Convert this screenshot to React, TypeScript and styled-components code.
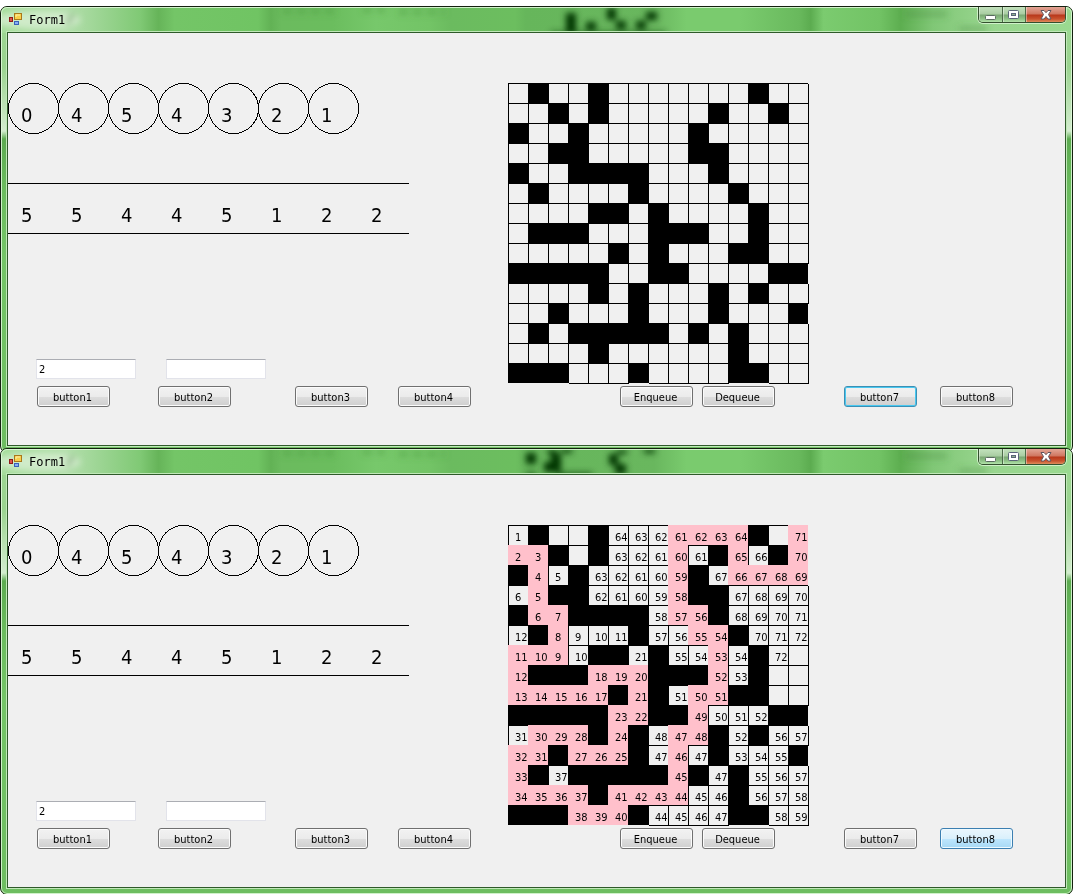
import React, { useId } from "react";
import styled, { createGlobalStyle, css } from "styled-components";

const GlobalStyle = createGlobalStyle`
  * { box-sizing: border-box; }
  body {
    margin: 0;
    background: #fff;
    color: #000;
    font: 11px/14px "DejaVu Sans Condensed", "DejaVu Sans", sans-serif;
  }
`;

const Desktop = styled.main`
  height: 100vh;
  padding-top: 6px;
  overflow: hidden;
`;

const Frame = styled.section`
  position: relative;
  margin-bottom: -5px;
  padding: 0 6px 6px;
  border: 1px solid #14200f;
  border-radius: 7px;
  overflow: hidden;
  background: linear-gradient(
    #9fd894 0,
    #9ad38f 60px,
    #d3ecce 124px,
    #5cab50 132px,
    #6abb5d 180px,
    #74c567 250px,
    #6dbd60 100%
  );

  &::after {
    content: "";
    position: absolute;
    inset: 0;
    border: 1px solid rgba(225, 250, 220, 0.85);
    border-radius: 6px;
    pointer-events: none;
  }
`;

const Backdrop = styled.svg`
  position: absolute;
  top: 0;
  left: 0;
  width: 100%;
  height: 26px;
`;

const TitleBar = styled.header`
  position: relative;
  z-index: 1;
  display: flex;
  height: 25px;
  padding-left: 2px;
  gap: 7px;
`;

const AppIcon = styled.svg`
  width: 13px;
  height: 13px;
  margin-top: 6px;
`;

const Title = styled.h1`
  margin: 5px auto 0 0;
  font: 12px/16px "DejaVu Sans Mono", monospace;
`;

const Controls = styled.div`
  display: flex;
  height: 16px;
  border: 1px solid #34502f;
  border-top: 0;
  border-radius: 0 0 5px 5px;
  overflow: hidden;
  box-shadow: 0 0 0 1px rgba(225, 250, 220, 0.75);
`;

const Control = styled.button<{ $close?: boolean }>`
  display: grid;
  place-items: center;
  width: ${(p) => (p.$close ? "40px" : "23px")};
  padding: 1px 0 0;
  border: 0;
  border-left: 1px solid #4c6c47;
  background: ${(p) =>
    p.$close
      ? "linear-gradient(#e3a596 0, #cf7660 7px, #b8371b 8px, #c9532f 12px, #de8c5c)"
      : "linear-gradient(#c3e2bd 0, #a9cda2 7px, #7ba874 8px, #8fc387 12px, #b3e4ab)"};
  box-shadow: inset 1px 0 0 rgba(255, 255, 255, 0.4);

  &:first-child {
    border-left: 0;
  }
`;

const Client = styled.div`
  position: relative;
  z-index: 1;
  height: 414px;
  border: 1px solid #2f5a2a;
  box-shadow: 0 0 0 1px #c0e8b8;
  background: #f0f0f0;
`;

const Upper = styled.div`
  display: flex;
  padding-top: 50px;
`;

const Structures = styled.div`
  flex: 0 0 500px;
`;

const digits = css`
  display: flex;
  margin: 0;
  padding: 0;
  list-style: none;
  font-size: 20px;
  line-height: 24px;
`;

const Stack = styled.ol`
  ${digits}
`;

const Ball = styled.li`
  position: relative;
  width: 50px;
  height: 51px;
  padding: 20px 0 0 13px;
`;

const Ring = styled.svg`
  position: absolute;
  top: 0;
  left: 0;
  width: 51px;
  height: 51px;
`;

const Queue = styled.ol`
  ${digits}
  width: 401px;
  height: 51px;
  margin-top: 49px;
  border: solid #000;
  border-width: 1px 0;
`;

const QueueItem = styled.li`
  width: 50px;
  padding: 19px 0 0 13px;
`;

const Fields = styled.div`
  display: flex;
  gap: 30px;
  margin: 125px 0 0 28px;
`;

const Field = styled.input`
  width: 100px;
  height: 20px;
  padding: 0 2px;
  border: 1px solid #e2e3ea;
  border-top-color: #abadb3;
  background: #fff;
  color: #000;
  font: inherit;
  outline: 0;
`;

const Maze = styled.table`
  height: 300px;
  border-spacing: 0;
`;

type Kind = "wall" | "path" | "open";

const Cell = styled.td<{ $kind: Kind }>`
  width: 20px;
  min-width: 20px;
  height: 20px;
  padding: 5px 0 0 7px;
  line-height: 15px;
  vertical-align: top;
  ${(p) => p.$kind === "wall" && "background: #000;"}
  ${(p) => p.$kind === "path" && "background: #ffc0cb;"}
  ${(p) =>
    p.$kind === "open" &&
    "background: #f0f0f0; box-shadow: inset 1px 1px 0 #000, 1px 1px 0 #000;"}
`;

const Actions = styled.div`
  display: flex;
  margin-top: 3px;
`;

type Look = "normal" | "focused" | "hot";

const looks: Record<Look, string> = {
  normal: `
    border-color: #707070;
    background: linear-gradient(#f2f2f2, #ebebeb 10px, #dddddd 10px, #cfcfcf);
    box-shadow: inset 0 0 0 1px #fbfbfb;`,
  focused: `
    border-color: #3c8fb4;
    background: linear-gradient(#f2f2f2, #ebebeb 10px, #dddddd 10px, #cfcfcf);
    box-shadow: inset 0 0 0 1px #48c8f0;`,
  hot: `
    border-color: #3c7fb1;
    background: linear-gradient(#eaf6fd, #d9f0fc 10px, #bee6fd 10px, #a7d9f5);
    box-shadow: inset 0 0 0 1px #eefaff;`,
};

const Button = styled.button<{ $before: number; $look: Look }>`
  width: 73px;
  height: 21px;
  margin-left: ${(p) => p.$before}px;
  padding: 2px 2px 0 0;
  border: 1px solid;
  border-radius: 3px;
  color: #000;
  font: inherit;
  ${(p) => looks[p.$look]}
`;

/* "#" is a wall, "." an empty cell, "*" marks a cell on the found route. */
const solved = [
  "1 # . . # 64 63 62 *61 *62 *63 *64 # . *71",
  "*2 *3 # . # 63 62 61 *60 61 # *65 66 # *70",
  "# *4 5 # 63 62 61 60 *59 # 67 *66 *67 *68 *69",
  "6 *5 # # 62 61 60 59 *58 # # 67 68 69 70",
  "# *6 *7 # # # # 58 *57 *56 # 68 69 70 71",
  "12 # *8 9 10 11 # 57 56 *55 *54 # 70 71 72",
  "*11 *10 *9 10 # # 21 # 55 54 *53 54 # 72 .",
  "*12 # # # *18 *19 *20 # # # *52 53 # . .",
  "*13 *14 *15 *16 *17 # *21 # 51 *50 *51 # # . .",
  "# # # # # *23 *22 # # *49 50 51 52 # #",
  "31 *30 *29 *28 # *24 # 48 *47 *48 # 52 # 56 57",
  "*32 *31 # *27 *26 *25 # 47 *46 47 # 53 54 55 #",
  "*33 # 37 # # # # # *45 # 47 # 55 56 57",
  "*34 *35 *36 *37 # *41 *42 *43 *44 45 46 # 56 57 58",
  "# # # *38 *39 *40 # 44 45 46 47 # # 58 59",
].map((row) => row.split(" "));

const blank = solved.map((row) => row.map((c) => (c === "#" ? "#" : ".")));

const kindOf = (c: string): Kind =>
  c === "#" ? "wall" : c.startsWith("*") ? "path" : "open";

const buttons: [string, number][] = [
  ["button1", 29],
  ["button2", 48],
  ["button3", 64],
  ["button4", 30],
  ["Enqueue", 149],
  ["Dequeue", 9],
  ["button7", 69],
  ["button8", 23],
];

type Blot = [x: number, y: number, w: number, h: number];

const GlassBackdrop = ({ blots }: { blots: Blot[] }) => {
  const id = useId().replace(/:/g, "");
  return (
    <Backdrop viewBox="0 0 1071 26" preserveAspectRatio="none" aria-hidden="true">
      <defs>
        <linearGradient id={`g${id}`}>
          <stop offset="0" stopColor="#a4dc99" />
          <stop offset="0.06" stopColor="#b4dfad" />
          <stop offset="0.13" stopColor="#80c975" />
          <stop offset="0.147" stopColor="#66b459" />
          <stop offset="0.162" stopColor="#74c567" />
          <stop offset="0.24" stopColor="#70c463" />
          <stop offset="0.252" stopColor="#62b255" />
          <stop offset="0.262" stopColor="#6bbb5e" />
          <stop offset="0.31" stopColor="#6bbd5e" />
          <stop offset="0.35" stopColor="#77c86b" />
          <stop offset="0.4" stopColor="#73c466" />
          <stop offset="0.42" stopColor="#6bbb5f" />
          <stop offset="0.48" stopColor="#6cbe5f" />
          <stop offset="0.49" stopColor="#66b65b" />
          <stop offset="0.61" stopColor="#69b75e" />
          <stop offset="0.64" stopColor="#7acb6e" />
          <stop offset="0.69" stopColor="#7acb6e" />
          <stop offset="0.745" stopColor="#69b95d" />
          <stop offset="0.756" stopColor="#5cac50" />
          <stop offset="0.768" stopColor="#7bcb6f" />
          <stop offset="0.82" stopColor="#72c365" />
          <stop offset="0.84" stopColor="#5dae50" />
          <stop offset="0.87" stopColor="#80c776" />
          <stop offset="0.92" stopColor="#98d58e" />
          <stop offset="1" stopColor="#9ad990" />
        </linearGradient>
        <filter id={`b${id}`} x="-10%" y="-50%" width="120%" height="200%">
          <feGaussianBlur stdDeviation="3" />
        </filter>
      </defs>
      <rect width="1071" height="26" fill={`url(#g${id})`} />
      <g filter={`url(#b${id})`}>
        <ellipse cx="36" cy="13" rx="44" ry="9" fill="#e3f3df" opacity="0.65" />
        <path d="M64 16l6-9 4 1-6 9z" fill="#6b9f63" opacity="0.8" />
        <path d="M282 4h56M362 3h22M398 5h46" stroke="#4b9a3e" strokeWidth="5" strokeDasharray="9 5" opacity="0.5" />
        <path d="M904 7h42M958 22h28" stroke="#4b8b42" strokeWidth="5" opacity="0.4" />
        {blots.map(([x, y, w, h]) => (
          <rect key={`${x}-${y}`} x={x} y={y} width={w} height={h} fill="#043400" />
        ))}
      </g>
    </Backdrop>
  );
};

const Form = ({
  maze,
  blots,
  active,
  look,
}: {
  maze: string[][];
  blots: Blot[];
  active: string;
  look: Look;
}) => (
  <Frame>
    <GlassBackdrop blots={blots} />
    <TitleBar>
      <AppIcon viewBox="0 0 13 13" aria-hidden="true">
        <rect x="5.5" y="0.5" width="7" height="6" fill="#f8cf4a" stroke="#a9781b" />
        <path d="M7 4V2h4" stroke="#fff0a8" fill="none" />
        <rect x="0.5" y="4.5" width="3" height="4" fill="#e0524a" stroke="#8f1a17" />
        <rect x="5.5" y="8.5" width="4" height="3" fill="#86aef5" stroke="#3a61b8" />
      </AppIcon>
      <Title>Form1</Title>
      <Controls>
        <Control aria-label="Minimize">
          <svg width="12" height="9" viewBox="0 0 12 9">
            <rect x="0.5" y="4.5" width="10" height="4" rx="1" fill="#fff" stroke="#5a6b60" />
          </svg>
        </Control>
        <Control aria-label="Maximize">
          <svg width="12" height="10" viewBox="0 0 12 10">
            <rect x="0.5" y="0.5" width="10" height="8" rx="1" fill="#fff" stroke="#5a6478" />
            <rect x="3.5" y="3.5" width="4" height="2" fill="#8fb18c" stroke="#5a6478" />
          </svg>
        </Control>
        <Control $close aria-label="Close">
          <svg width="12" height="10" viewBox="0 0 12 10">
            <path
              d="M1 .5h3l2 2.2 2-2.2h3L8.500 4.500l2.500 4.500H8L6 6.500 4 9H1l2.500-4.500z"
              fill="#fff"
              stroke="#61545c"
            />
          </svg>
        </Control>
      </Controls>
    </TitleBar>
    <Client>
      <Upper>
        <Structures>
          <Stack>
            {[0, 4, 5, 4, 3, 2, 1].map((n, i) => (
              <Ball key={i}>
                <Ring viewBox="0 0 51 51" aria-hidden="true">
                  <circle cx="25.5" cy="25.5" r="25" fill="none" stroke="#000" shapeRendering="crispEdges" />
                </Ring>
                {n}
              </Ball>
            ))}
          </Stack>
          <Queue>
            {[5, 5, 4, 4, 5, 1, 2, 2].map((n, i) => (
              <QueueItem key={i}>{n}</QueueItem>
            ))}
          </Queue>
          <Fields>
            <Field aria-label="First value" defaultValue="2" />
            <Field aria-label="Second value" />
          </Fields>
        </Structures>
        <Maze>
          <tbody>
            {maze.map((row, r) => (
              <tr key={r}>
                {row.map((c, i) => (
                  <Cell key={i} $kind={kindOf(c)}>
                    {c.replace(/[#.*]/g, "")}
                  </Cell>
                ))}
              </tr>
            ))}
          </tbody>
        </Maze>
      </Upper>
      <Actions>
        {buttons.map(([label, before]) => (
          <Button key={label} $before={before} $look={label === active ? look : "normal"}>
            {label}
          </Button>
        ))}
      </Actions>
    </Client>
  </Frame>
);

const App = () => (
  <>
    <GlobalStyle />
    <Desktop>
      <Form
        maze={blank}
        active="button7"
        look="focused"
        blots={[
          [565, 6, 10, 19],
          [585, 15, 10, 8],
          [606, 1, 9, 12],
          [615, 14, 10, 8],
          [645, 5, 11, 8],
          [635, 14, 10, 8],
          [550, 25, 115, 2],
        ]}
      />
      <Form
        maze={solved}
        active="button8"
        look="hot"
        blots={[
          [525, 4, 10, 11],
          [525, 24, 10, 3],
          [546, 1, 10, 4],
          [560, 0, 11, 4],
          [550, 5, 10, 8],
          [543, 13, 17, 10],
          [556, 24, 35, 3],
          [616, 1, 10, 4],
          [608, 5, 9, 11],
          [614, 15, 11, 10],
          [643, 0, 11, 4],
        ]}
      />
    </Desktop>
  </>
);

export default App;
